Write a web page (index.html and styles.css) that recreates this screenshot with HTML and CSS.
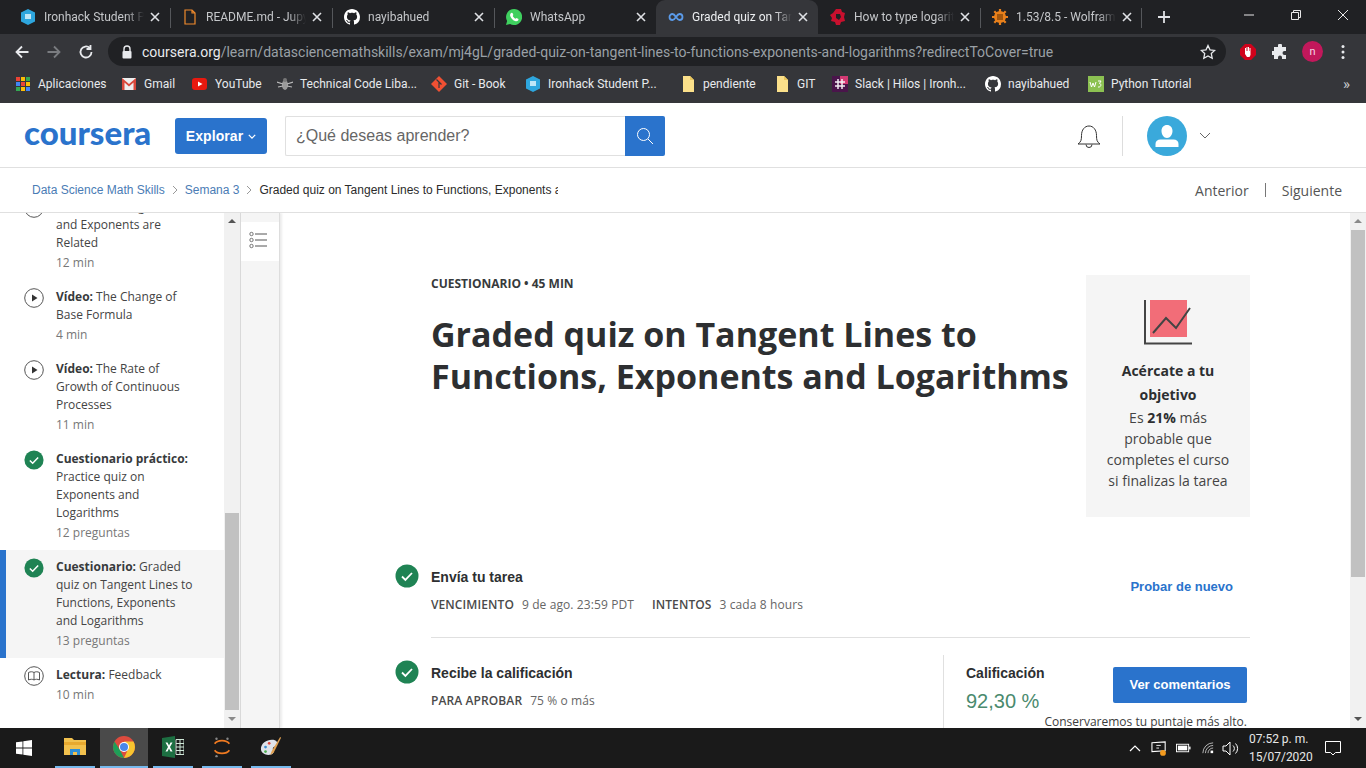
FILE: index.html
```html
<!DOCTYPE html>
<html lang="es">
<head>
<meta charset="utf-8">
<title>Graded quiz on Tangent Lines</title>
<link rel="stylesheet" href="styles.css">
</head>
<body>
<svg class="defs" width="0" height="0">
  <symbol id="gh" viewBox="0 0 16 16"><path fill="#fff" d="M8 0C3.58 0 0 3.58 0 8c0 3.54 2.29 6.53 5.47 7.59.4.07.55-.17.55-.38 0-.19-.01-.82-.01-1.49-2.01.37-2.53-.49-2.69-.94-.09-.23-.48-.94-.82-1.13-.28-.15-.68-.52-.01-.53.63-.01 1.08.58 1.23.82.72 1.21 1.87.87 2.33.66.07-.52.28-.87.51-1.07-1.78-.2-3.64-.89-3.64-3.95 0-.87.31-1.59.82-2.15-.08-.2-.36-1.02.08-2.12 0 0 .67-.21 2.2.82.64-.18 1.32-.27 2-.27.68 0 1.36.09 2 .27 1.53-1.04 2.2-.82 2.2-.82.44 1.1.16 1.92.08 2.12.51.56.82 1.27.82 2.15 0 3.07-1.87 3.75-3.65 3.95.29.25.54.73.54 1.48 0 1.07-.01 1.93-.01 2.2 0 .21.15.46.55.38A8.013 8.013 0 0016 8c0-4.42-3.58-8-8-8z"/></symbol>
  <symbol id="hex" viewBox="0 0 16 16"><path fill="#2ea6de" d="M8 0l7 3.6v8.8L8 16l-7-3.6V3.6z"/><rect x="5" y="5" width="6" height="5" fill="#bfe6f7"/></symbol>
  <symbol id="x" viewBox="0 0 10 10"><path d="M1 1l8 8M9 1l-8 8" stroke="#dfe1e5" stroke-width="1.6" fill="none"/></symbol>
  <symbol id="folder" viewBox="0 0 16 16"><path fill="#fbe08a" d="M3 0h7l4 4v12H3z"/><path fill="#e9c65c" d="M10 0l4 4h-4z"/></symbol>
  <symbol id="check" viewBox="0 0 24 24"><circle cx="12" cy="12" r="11.5" fill="#1f8354"/><path d="M7 12.5l3.4 3.4L17 9" fill="none" stroke="#fff" stroke-width="1.8"/></symbol>
  <symbol id="play" viewBox="0 0 20 20"><circle cx="10" cy="10" r="9.3" fill="none" stroke="#555" stroke-width="1"/><path d="M8 6.5l5.5 3.5L8 13.500z" fill="#333"/></symbol>
</svg>

<header class="chrome">
  <div class="tabs">
    <div class="tab"><svg class="fav"><use href="#hex"/></svg><span class="tab-title">Ironhack Student Portal</span><svg class="tab-x"><use href="#x"/></svg></div>
    <div class="tab sep"><svg class="fav" viewBox="0 0 16 16"><path d="M3 1h7l3 3v11H3z M10 1v3h3" fill="none" stroke="#f08a2c" stroke-width="1.200"/></svg><span class="tab-title">README.md - Jupyter</span><svg class="tab-x"><use href="#x"/></svg></div>
    <div class="tab sep"><svg class="fav"><use href="#gh"/></svg><span class="tab-title">nayibahued</span><svg class="tab-x"><use href="#x"/></svg></div>
    <div class="tab sep"><svg class="fav" viewBox="0 0 16 16"><path fill="#3fd05f" d="M8 0a8 8 0 0 0-6.900 12L0 16l4.100-1.100A8 8 0 1 0 8 0z"/><path fill="#fff" d="M5.500 3.800l1 .1.900 2.200-.7 1c.6 1.200 1.500 2 2.800 2.700l1-.9 2 1-.2 1.300c-.6 1-2 1.300-3.200.9C7.300 11.500 5 9.500 4.200 7c-.4-1.300.3-2.600 1.300-3.200z"/></svg><span class="tab-title">WhatsApp</span><svg class="tab-x"><use href="#x"/></svg></div>
    <div class="tab active"><svg class="fav" viewBox="0 0 16 16"><path d="M4.500 5a3 3 0 1 0 0 6c3 0 4-6 7-6a3 3 0 1 1 0 6c-3 0-4-6-7-6z" fill="none" stroke="#5b9bea" stroke-width="1.800"/></svg><span class="tab-title">Graded quiz on Tangent</span><svg class="tab-x"><use href="#x"/></svg></div>
    <div class="tab"><svg class="fav" viewBox="0 0 16 16"><path fill="#c8102e" d="M6 0h5l1 3 3 1-1 4 1 4-4 1-1 3H6l-1-3-4-1 1-3-2-3 3-2z"/><path fill="#202124" d="M6 5h4l1 3-2 3-3-2z"/></svg><span class="tab-title">How to type logarithm</span><svg class="tab-x"><use href="#x"/></svg></div>
    <div class="tab sep sep-end"><svg class="fav" viewBox="0 0 16 16"><circle cx="8" cy="8" r="6" fill="#e8801c"/><path d="M8 0v16M0 8h16M2.300 2.300l11.400 11.400M13.700 2.300L2.300 13.700" stroke="#e8801c" stroke-width="2.200"/><path d="M5 6h6M5 8h6M5 10h6" stroke="#5a2c00" stroke-width="1"/></svg><span class="tab-title">1.53/8.5 - Wolfram Alpha</span><svg class="tab-x"><use href="#x"/></svg></div>
    <svg class="new-tab" viewBox="0 0 14 14"><path d="M7 1v12M1 7h12" stroke="#dfe1e5" stroke-width="1.800"/></svg>
    <div class="win">
      <svg viewBox="0 0 12 12"><path d="M1 6h10" stroke="#e8e8e8" stroke-width="1"/></svg>
      <svg viewBox="0 0 12 12"><path d="M1.500 3.500h7v7h-7zM3.500 3.500v-2h7v7h-2" fill="none" stroke="#e8e8e8" stroke-width="1"/></svg>
      <svg viewBox="0 0 12 12"><path d="M1 1l10 10M11 1L1 11" stroke="#e8e8e8" stroke-width="1"/></svg>
    </div>
  </div>
  <div class="toolbar">
    <svg class="nav" viewBox="0 0 16 16"><path d="M14.500 8H2.500M8 2.500L2.500 8 8 13.500" fill="none" stroke="#e8eaed" stroke-width="1.800"/></svg>
    <svg class="nav" viewBox="0 0 16 16"><path d="M1.500 8h12M8 2.500L13.500 8 8 13.500" fill="none" stroke="#7a7c80" stroke-width="1.800"/></svg>
    <svg class="nav" viewBox="0 0 16 16"><path d="M13.500 8A5.500 5.500 0 1 1 11.800 4M12.500 1v4h-4" fill="none" stroke="#e8eaed" stroke-width="1.800"/></svg>
    <div class="omnibox">
      <svg class="lock" viewBox="0 0 12 14"><path d="M3 6V4a3 3 0 0 1 6 0v2" fill="none" stroke="#e8eaed" stroke-width="1.400"/><rect x="1.500" y="6" width="9" height="7.500" rx="1" fill="#e8eaed"/></svg>
      <span class="url"><b>coursera.org</b>/learn/datasciencemathskills/exam/mj4gL/graded-quiz-on-tangent-lines-to-functions-exponents-and-logarithms?redirectToCover=true</span>
      <svg class="star" viewBox="0 0 16 16"><path d="M8 1.500l2 4.300 4.700.6-3.400 3.200.9 4.700L8 12l-4.200 2.300.9-4.700L1.300 6.400 6 5.800z" fill="none" stroke="#e8eaed" stroke-width="1.300"/></svg>
    </div>
    <svg class="ext" viewBox="0 0 16 16"><path fill="#d0021b" d="M5 0h6l5 5v6l-5 5H5l-5-5V5z"/><path fill="#fff" d="M5 7V4h1v3h.5V3h1v4H8V3h1v4h.5V4h1v7l-1 2H7L5 10z"/></svg>
    <svg class="ext" viewBox="0 0 16 16"><path fill="#e8eaed" d="M6 1.500a2 2 0 0 1 4 0V3h4v4h-1.500a2 2 0 0 0 0 4H14v4H10v-1.500a2 2 0 0 0-4 0V15H2v-4H.8a2 2 0 0 1 0-4H2V3h4z"/></svg>
    <span class="avatar-n">n</span>
    <svg class="dots" viewBox="0 0 4 16"><circle cx="2" cy="2.500" r="1.500" fill="#e8eaed"/><circle cx="2" cy="8" r="1.500" fill="#e8eaed"/><circle cx="2" cy="13.500" r="1.500" fill="#e8eaed"/></svg>
  </div>
  <div class="bookmarks">
    <div class="bm"><svg viewBox="0 0 16 16"><path fill="#ea4335" d="M1 1h4v4H1z"/><path fill="#fbbc05" d="M6 1h4v4H6z"/><path fill="#34a853" d="M11 1h4v4h-4z"/><path fill="#4285f4" d="M1 6h4v4H1z"/><path fill="#ea4335" d="M6 6h4v4H6z"/><path fill="#fbbc05" d="M11 6h4v4h-4z"/><path fill="#34a853" d="M1 11h4v4H1z"/><path fill="#fbbc05" d="M6 11h4v4H6z"/><path fill="#4285f4" d="M11 11h4v4h-4z"/></svg><span>Aplicaciones</span></div>
    <div class="bm"><svg viewBox="0 0 16 16"><path fill="#eee" d="M1 2h14v12H1z"/><path fill="#d9483b" d="M1 2l7 6 7-6v12h-2.500V6.500L8 10.500l-4.500-4V14H1z"/></svg><span>Gmail</span></div>
    <div class="bm"><svg viewBox="0 0 16 16"><rect y="2" width="15" height="12" rx="3" fill="#e8190f"/><path fill="#fff" d="M6 5.500l4.500 2.500L6 10.500z"/></svg><span>YouTube</span></div>
    <div class="bm"><svg viewBox="0 0 16 16"><ellipse cx="8" cy="9" rx="3" ry="5" fill="#9a9a9a"/><path d="M0 6l6 2M16 6l-6 2M1 11l5-1M15 11l-5-1" stroke="#bbb" stroke-width="1.200"/><circle cx="8" cy="4" r="2" fill="#777"/></svg><span>Technical Code Liba...</span></div>
    <div class="bm"><svg viewBox="0 0 16 16"><path fill="#f05033" d="M8 0l8 8-8 8-8-8z"/><path d="M5.500 3.500l5 5M8 6v6" stroke="#35363a" stroke-width="1.200"/></svg><span>Git - Book</span></div>
    <div class="bm"><svg><use href="#hex"/></svg><span>Ironhack Student P...</span></div>
    <div class="bm"><svg><use href="#folder"/></svg><span>pendiente</span></div>
    <div class="bm"><svg><use href="#folder"/></svg><span>GIT</span></div>
    <div class="bm"><svg viewBox="0 0 16 16"><rect width="16" height="16" fill="#4a154b"/><path fill="#d33a73" d="M8 0h8v8H8z"/><path d="M6 3v10M10 3v10M3 6h10M3 10h10" stroke="#f3eef3" stroke-width="1.500"/></svg><span>Slack | Hilos | Ironh...</span></div>
    <div class="bm"><svg><use href="#gh"/></svg><span>nayibahued</span></div>
    <div class="bm"><svg viewBox="0 0 16 16"><rect width="16" height="16" fill="#8cc152"/><path d="M2 6l1.500 5L5 7l1.500 4L8 6M10 5h3l-1.500 2.500c2 0 2 4-1.500 3.500" fill="none" stroke="#fff" stroke-width="1"/></svg><span>Python Tutorial</span></div>
    <div class="bm-more">»</div>
  </div>
</header>

<div class="site-head">
  <div class="logo">coursera</div>
  <div class="explore">Explorar <svg viewBox="0 0 10 6"><path d="M1 1l4 4 4-4" fill="none" stroke="#fff" stroke-width="1.600"/></svg></div>
  <div class="search">
    <div class="search-input">¿Qué deseas aprender?</div>
    <div class="search-btn"><svg viewBox="0 0 18 18"><circle cx="7.500" cy="7.500" r="6" fill="none" stroke="#fff" stroke-width="1"/><path d="M12 12l5 5" stroke="#fff" stroke-width="1"/></svg></div>
  </div>
  <div class="head-right">
    <svg class="bell" viewBox="0 0 24 25"><path d="M1 19c3-2 3.500-4 3.500-8.500C4.500 5 7.500 1 12 1s7.500 4 7.500 9.500c0 4.500.5 6.500 3.500 8.500z M9 19.500a3 3 0 0 0 6 0" fill="none" stroke="#333" stroke-width="1"/></svg>
    <div class="vsep"></div>
    <svg class="user" viewBox="0 0 40 40"><circle cx="20" cy="20" r="20" fill="#3aa9db"/><path fill="#fff" d="M20 9c3.300 0 5.500 2.600 5.500 6S23.300 22 20 22s-5.500-3.600-5.500-7 2.200-6 5.500-6zM8.500 31v-3c0-3 2-4.500 5-4.500h13c3 0 5 1.500 5 4.500v3z"/></svg>
    <svg class="caret" viewBox="0 0 12 7"><path d="M1 1l5 5 5-5" fill="none" stroke="#666" stroke-width="1"/></svg>
  </div>
</div>

<div class="crumbs">
  <a class="crumb">Data Science Math Skills</a>
  <svg class="crumb-sep" viewBox="0 0 6 10"><path d="M1 1l4 4-4 4" fill="none" stroke="#999" stroke-width="1"/></svg>
  <a class="crumb">Semana 3</a>
  <svg class="crumb-sep" viewBox="0 0 6 10"><path d="M1 1l4 4-4 4" fill="none" stroke="#999" stroke-width="1"/></svg>
  <span class="crumb-now">Graded quiz on Tangent Lines to Functions, Exponents and Logarithms</span>
  <div class="pager"><span>Anterior</span><i></i><span>Siguiente</span></div>
</div>

<main class="body">
  <nav class="side">
    <div class="item"><svg class="ico"><use href="#play"/></svg><div><p><b>Vídeo:</b> How Logarithms<br>and Exponents are<br>Related</p><small>12 min</small></div></div>
    <div class="item"><svg class="ico"><use href="#play"/></svg><div><p><b>Vídeo:</b> The Change of<br>Base Formula</p><small>4 min</small></div></div>
    <div class="item"><svg class="ico"><use href="#play"/></svg><div><p><b>Vídeo:</b> The Rate of<br>Growth of Continuous<br>Processes</p><small>11 min</small></div></div>
    <div class="item"><svg class="ico"><use href="#check"/></svg><div><p><b>Cuestionario práctico:</b><br>Practice quiz on<br>Exponents and<br>Logarithms</p><small>12 preguntas</small></div></div>
    <div class="item current"><svg class="ico"><use href="#check"/></svg><div><p><b>Cuestionario:</b> Graded<br>quiz on Tangent Lines to<br>Functions, Exponents<br>and Logarithms</p><small>13 preguntas</small></div></div>
    <div class="item"><svg class="ico" viewBox="0 0 20 20"><circle cx="10" cy="10" r="9.300" fill="none" stroke="#555"/><path d="M4.500 6.500c2-1 4-1 5.500 0 1.500-1 3.500-1 5.500 0V14c-2-1-4-1-5.500 0-1.500-1-3.500-1-5.500 0zM10 6.500V14" fill="none" stroke="#444" stroke-width=".9"/></svg><div><p><b>Lectura:</b> Feedback</p><small>10 min</small></div></div>
  </nav>
  <div class="sbar sbar-left"><span class="up"></span><span class="thumb"></span><span class="down"></span></div>
  <div class="rail"><div class="rail-btn"><svg viewBox="0 0 18 18"><circle cx="2.500" cy="3" r="1.700" fill="none" stroke="#555" stroke-width=".8"/><circle cx="2.500" cy="9" r="1.700" fill="none" stroke="#555" stroke-width=".8"/><circle cx="2.500" cy="15" r="1.700" fill="none" stroke="#555" stroke-width=".8"/><path d="M6 3h12M6 9h12M6 15h12" stroke="#555" stroke-width="1"/></svg></div></div>
  <section class="content">
    <div class="cover">
      <div class="cover-text">
        <div class="kicker">CUESTIONARIO • 45 MIN</div>
        <h1>Graded quiz on Tangent Lines to Functions, Exponents and Logarithms</h1>
      </div>
      <aside class="goal">
        <svg viewBox="0 0 48 46"><rect x="6" y="0" width="37" height="37" fill="#f26d78"/><path d="M1 0v43.500h47" fill="none" stroke="#444" stroke-width="2"/><path d="M9 33l13-15 10 10 14-20" fill="none" stroke="#444" stroke-width="2"/></svg>
        <h2>Acércate a tu objetivo</h2>
        <p>Es <b>21%</b> más probable que completes el curso si finalizas la tarea</p>
      </aside>
    </div>
    <div class="step step-one">
      <svg class="step-ico"><use href="#check"/></svg>
      <div class="step-body">
        <h3>Envía tu tarea</h3>
        <div class="meta"><b>VENCIMIENTO</b><span>9 de ago. 23:59 PDT</span><b class="gap">INTENTOS</b><span>3 cada 8 hours</span></div>
      </div>
      <a class="retry">Probar de nuevo</a>
    </div>
    <div class="step step-two">
      <svg class="step-ico"><use href="#check"/></svg>
      <div class="step-body">
        <h3>Recibe la calificación</h3>
        <div class="meta"><b>PARA APROBAR</b><span>75 % o más</span></div>
      </div>
      <div class="grade">
        <div class="grade-row">
          <div><h4>Calificación</h4><div class="score">92,30 %</div></div>
          <a class="btn">Ver comentarios</a>
        </div>
        <div class="note">Conservaremos tu puntaje más alto.</div>
      </div>
    </div>
  </section>
  <div class="sbar sbar-right"><span class="up"></span><span class="thumb"></span><span class="down"></span></div>
</main>

<footer class="taskbar">
  <svg class="t-win" viewBox="0 0 16 16"><path fill="#fff" d="M0 2.300l6.500-.9v6.200H0zM7.300 1.300L16 0v7.600H7.300zM0 8.400h6.500v6.200L0 13.700zM7.300 8.400H16V16l-8.700-1.200z"/></svg>
  <div class="t-app"><svg viewBox="0 0 22 20"><path fill="#f2c14e" d="M0 1h8l2 2h12v15H0z"/><path fill="#e8a92f" d="M0 5h22v3H0z"/><path fill="#2f8fd6" d="M6 12h10v6h-3v-3H9v3H6z"/></svg></div>
  <div class="t-app on"><svg viewBox="0 0 22 22"><circle cx="11" cy="11" r="11" fill="#dd4b3e"/><path fill="#1e9e58" d="M11 22A11 11 0 0 1 1.500 5.500L7 14l4 8z"/><path fill="#f7c42f" d="M11 22a11 11 0 0 0 9.500-16.500H11l4 8z"/><circle cx="11" cy="11" r="5" fill="#fff"/><circle cx="11" cy="11" r="4" fill="#4a86e8"/></svg></div>
  <div class="t-app"><svg viewBox="0 0 22 22"><path fill="#1d6f42" d="M0 2l13-2v22L0 20z"/><path fill="#fff" d="M3.500 6.500h2L7 9.500l1.500-3h2L8 11l2.500 4.500h-2L7 12.500l-1.500 3h-2L6 11z"/><path d="M14 3.500h8v15h-8zM14 7.500h8M14 11h8M14 14.500h8M18 3.500v15" fill="none" stroke="#cfe8d8" stroke-width="1"/></svg></div>
  <div class="t-app"><svg viewBox="0 0 22 24"><path d="M3 8.500c3-4.500 13-4.500 16 0M3 15.500c3 4.500 13 4.500 16 0" fill="none" stroke="#ef7a21" stroke-width="2"/><circle cx="5" cy="3" r="1.300" fill="#888"/><circle cx="17" cy="3" r="1.300" fill="#888"/><circle cx="5" cy="22" r="1.300" fill="#888"/></svg></div>
  <div class="t-app"><svg viewBox="0 0 24 24"><path fill="#dfe3ea" d="M1 14c0-6 6-10 12-10 5 0 7 3 5 6-1 2-4 1-4 4 0 2 2 3 0 5-3 3-13 2-13-5z"/><circle cx="6" cy="12" r="1.500" fill="#3b8ed0"/><circle cx="10" cy="8" r="1.500" fill="#e0473d"/><circle cx="6" cy="17" r="1.500" fill="#4caf50"/><path d="M22 1l-9 15-2 5 4-3 8-16z" fill="#e0a050"/></svg></div>
  <div class="tray">
    <svg class="tray-i chev" viewBox="0 0 12 7"><path d="M1 6l5-5 5 5" fill="none" stroke="#fff" stroke-width="1.200"/></svg>
    <svg class="tray-i mon" viewBox="0 0 18 17"><path d="M1 2l15-1v10l-15 1z" fill="none" stroke="#fff" stroke-width="1.200"/><path d="M6 5h5M6 8h3" stroke="#fff"/><circle cx="13.500" cy="13.500" r="3.300" fill="#f39a1e"/></svg>
    <svg class="tray-i bat" viewBox="0 0 16 10"><rect x=".5" y="1" width="13" height="8" fill="none" stroke="#fff"/><rect x="2" y="2.500" width="10" height="5" fill="#fff"/><rect x="14" y="3.500" width="1.500" height="3" fill="#fff"/></svg>
    <svg class="tray-i wifi" viewBox="0 0 14 14"><path d="M1 13A12 12 0 0 1 13 1M4 13a9 9 0 0 1 9-9M7 13a6 6 0 0 1 6-6" fill="none" stroke="#ccc" stroke-width="1"/><rect x="10" y="10" width="3" height="3" fill="#fff"/></svg>
    <svg class="tray-i vol" viewBox="0 0 17 15"><path d="M1 5h3l4-4v13l-4-4H1zM11 4.500a4 4 0 0 1 0 6M13.500 2.500a7 7 0 0 1 0 10" fill="none" stroke="#fff" stroke-width="1"/></svg>
    <div class="clock"><div>07:52 p. m.</div><div>15/07/2020</div></div>
    <svg class="tray-i msg" viewBox="0 0 16 15"><path d="M.5.500h15v11h-5L8 14l-2.500-2.500h-5z" fill="none" stroke="#fff" stroke-width="1"/></svg>
  </div>
</footer>
</body>
</html>
```
FILE: styles.css
```css
* { box-sizing: border-box; }
html, body { margin: 0; height: 100%; }
body {
  width: 1366px; height: 768px; overflow: hidden; display: flex; flex-direction: column;
  background: #fff; font-family: "Open Sans", "Liberation Sans", sans-serif; color: #373a3c;
}
.defs { position: absolute; }
p, h1, h2, h3, h4 { margin: 0; }

/* browser chrome */
.chrome { flex: none; height: 103px; background: #35363a; color: #e8eaed; font-family: Roboto, "Open Sans", sans-serif; font-size: 12px; }
.tabs { height: 34px; background: #202124; padding-left: 8px; display: flex; align-items: center; }
.tab { width: 162px; height: 34px; flex: none; display: flex; align-items: center; padding: 0 10px 0 12px; color: #c5c7ca; position: relative; }
.tab.sep::before { content: ""; position: absolute; left: 0; top: 8px; height: 20px; width: 1px; background: #55575b; }
.tab.sep-end::after { content: ""; position: absolute; right: 0; top: 8px; height: 20px; width: 1px; background: #55575b; }
.tab.active { background: #35363a; color: #eceef0; border-radius: 9px 9px 0 0; }
.fav { width: 16px; height: 16px; flex: none; margin-right: 8px; }
.tab-title { flex: 1; min-width: 0; white-space: nowrap; overflow: hidden; -webkit-mask-image: linear-gradient(90deg, #000 82%, transparent); mask-image: linear-gradient(90deg, #000 82%, transparent); }
.tab-x { width: 10px; height: 10px; flex: none; margin-left: 6px; }
.new-tab { width: 14px; height: 14px; margin-left: 15px; }
.win { margin-left: auto; display: flex; gap: 35px; padding-right: 17px; margin-top: -4px; }
.win svg { width: 12px; height: 12px; }

.toolbar { height: 35px; display: flex; align-items: center; padding-left: 14px; }
.nav { width: 16px; height: 16px; margin-right: 16px; flex: none; }
.omnibox { width: 1118px; height: 29px; margin-left: -2px; background: #202124; border-radius: 15px; display: flex; align-items: center; padding: 0 10px 0 13px; font-size: 14px; }
.lock { width: 12px; height: 14px; flex: none; margin-right: 9px; }
.url { flex: 1; white-space: nowrap; overflow: hidden; color: #9aa0a6; font-size: 14px; }
.url b { font-weight: 400; color: #e8eaed; }
.star { width: 16px; height: 16px; flex: none; }
.ext { width: 16px; height: 16px; flex: none; margin-left: 14px; }
.ext + .ext { margin-left: 16px; }
.avatar-n { width: 21px; height: 21px; margin-left: 14px; border-radius: 50%; background: #c2185b; color: #f5d6e3; font-size: 11px; display: flex; align-items: center; justify-content: center; flex: none; }
.dots { width: 4px; height: 16px; margin-left: 18px; flex: none; }

.bookmarks { height: 34px; padding-bottom: 4px; display: grid; grid-template-columns: 106px 71px 85px 154px 94px 155px 94px 58px 153px 103px 255px 1fr; padding-left: 15px; align-items: center; }
.bm { display: flex; align-items: center; gap: 7px; white-space: nowrap; color: #e8eaed; }
.bm svg { width: 16px; height: 16px; flex: none; }
.bm-more { color: #c8cacd; font-size: 15px; }

/* site header */
.site-head { flex: none; height: 65px; padding-top: 1px; border-bottom: 1px solid #e0e0e0; display: flex; align-items: center; padding-left: 24px; }
.logo { width: 151px; font-family: "Lato", sans-serif; font-weight: 900; font-size: 33px; color: #2a73cc; line-height: 1; margin-top: -7px; }
.explore { width: 92px; height: 36px; background: #2a73cc; border-radius: 3px; color: #fff; font-family: "Liberation Sans", sans-serif; font-weight: 700; font-size: 14px; letter-spacing: .1px; display: flex; align-items: center; justify-content: center; gap: 5px; }
.explore svg { width: 8px; height: 5px; margin-top: 2px; }
.search { margin-left: 18px; display: flex; height: 40px; }
.search-input { width: 340px; border: 1px solid #e0e0e0; border-right: 0; border-radius: 2px 0 0 2px; padding-left: 10px; font: 16px/38px "Liberation Sans", sans-serif; color: #666; }
.search-btn { width: 40px; background: #2a73cc; border-radius: 0 2px 2px 0; display: flex; align-items: center; justify-content: center; }
.search-btn svg { width: 18px; height: 18px; }
.head-right { margin-left: auto; display: flex; align-items: center; padding-right: 155px; }
.bell { width: 24px; height: 25px; margin: 3px 1px 0 -1px; }
.vsep { width: 1px; height: 40px; background: #ddd; margin: 0 24px 0 20px; }
.user { width: 40px; height: 40px; }
.caret { width: 12px; height: 7px; margin-left: 12px; }

/* breadcrumb */
.crumbs { flex: none; height: 45px; border-bottom: 1px solid #e0e0e0; display: flex; align-items: center; padding: 0 24px 1px 32px; font: 12px "Liberation Sans", sans-serif; }
.crumb { color: #4a7cb5; white-space: nowrap; }
.crumb-sep { width: 6px; height: 10px; margin: 0 7px; flex: none; }
.crumb-now { width: 299px; margin-left: 0; overflow: hidden; white-space: nowrap; color: #2b2b2b; }
.pager { margin-left: auto; display: flex; align-items: center; font: 14px "Open Sans", sans-serif; color: #555; padding-top: 1px; }
.pager i { width: 1px; height: 14px; background: #777; margin: 0 16px; }

/* body */
.body { flex: 1; min-height: 0; display: flex; overflow: hidden; }
.side { width: 224px; flex: none; display: flex; flex-direction: column; justify-content: flex-end; padding-bottom: 16px; overflow: hidden; font-size: 12px; }
.item { flex: none; display: flex; gap: 12px; padding: 8px 8px 7px 24px; }
.item.current { background: #f5f5f5; box-shadow: inset 6px 0 0 #2a73cc; }
.ico { width: 20px; height: 20px; flex: none; }
.item p { line-height: 18px; color: #444; white-space: nowrap; }
.item p b { color: #373a3c; }
.item small { display: block; font-size: 12px; line-height: 20px; padding-top: 1px; color: #777; }

.sbar { width: 16px; flex: none; background: #f1f1f1; display: flex; flex-direction: column; align-items: center; position: relative; }
.thumb { width: 14px; background: #c1c1c1; }
.up, .down { width: 0; height: 0; border-left: 4px solid transparent; border-right: 4px solid transparent; }
.up { border-bottom: 4px solid #555; }
.down { border-top: 4px solid #8a8a8a; }
.sbar-left .up { margin-top: 6px; }
.sbar-left .thumb { height: 197px; margin-top: 290px; }
.sbar-left .down { margin-top: 7px; }
.sbar-right .up { margin-top: 6px; border-bottom-color: #8a8a8a; }
.sbar-right .thumb { height: 347px; margin-top: 7px; }
.sbar-right .down { margin-top: 140px; border-top-color: #555; }

.rail { width: 40px; flex: none; background: #f5f5f5; border-left: 1px solid #d9d9d9; border-right: 1px solid #ddd; box-shadow: 2px 0 2px rgba(0,0,0,.08); padding-top: 9px; }
.rail-btn { height: 39px; background: #fff; display: flex; align-items: center; justify-content: flex-start; padding: 0 0 3px 8px; }
.rail-btn svg { width: 18px; height: 18px; }

.content { flex: 1; min-width: 0; padding: 62px 100px 0 151px; overflow: hidden; }
.cover { display: flex; height: 242px; }
.cover-text { flex: 1; min-width: 0; }
.kicker { font-size: 12px; font-weight: 700; line-height: 16px; padding-top: 1px; height: 16px; color: #373a3c; }
h1 { margin-top: 22px; width: 650px; font-size: 34px; line-height: 42px; font-weight: 700; color: #2d2f31; }
.goal { width: 164px; flex: none; background: #f5f5f5; padding-top: 25px; text-align: center; font-size: 14px; }
.goal svg { width: 48px; height: 46px; display: block; margin: 0 auto; }
.goal h2 { margin-top: 13px; padding: 0 20px; font-size: 14px; font-weight: 700; line-height: 24px; color: #2d2f31; }
.goal p { padding: 0 18px; line-height: 21px; color: #444; }
.goal p b { color: #2d2f31; }

.step { display: flex; margin-left: -36px; position: relative; }
.step-one { margin-top: 47px; height: 74px; }
.step-two { margin-top: 0; padding-top: 22px; }
.step-one::after { content: ""; position: absolute; left: 36px; right: 0; bottom: 0; height: 1px; background: #e0e0e0; }
.step-ico { width: 24px; height: 24px; flex: none; margin-right: 12px; }
.step-body { flex: 1; min-width: 0; padding-top: 3px; }
h3 { font: 700 14px/20px "Liberation Sans", sans-serif; color: #2d2f31; }
.meta { margin-top: 9px; font-size: 12px; line-height: 18px; color: #666; white-space: nowrap; letter-spacing: .1px; }
.meta b { color: #4a4a4a; font-weight: 600; margin-right: 8px; }
.meta .gap { margin-left: 18px; }
.retry { align-self: flex-start; margin: 15px 17px 0 0; font: 700 13px/16px "Liberation Sans", sans-serif; color: #2a73cc; }
.grade { width: 307px; flex: none; margin-top: -5px; border-left: 1px solid #e0e0e0; padding: 0 3px 0 22px; height: 73px; }
.grade-row { display: flex; justify-content: space-between; }
h4 { font: 700 14px/20px "Liberation Sans", sans-serif; color: #2d2f31; margin-top: 8px; }
.score { font: 20px/26px "Liberation Sans", sans-serif; color: #4a8a6e; margin-top: 5px; }
.btn { width: 134px; height: 36px; margin-top: 12px; background: #2a73cc; border-radius: 2px; color: #fff; font: 700 13px/35px "Liberation Sans", sans-serif; text-align: center; }
.note { text-align: right; font-size: 12px; line-height: 16px; margin: 0 0 0 -60px; white-space: nowrap; color: #3c3c3c; }

/* taskbar */
.taskbar { flex: none; height: 40px; background: #1a1a1a; display: flex; align-items: stretch; color: #fff; font-family: Roboto, "Open Sans", sans-serif; font-size: 12px; padding-left: 16px; }
.t-win { width: 16px; height: 16px; align-self: center; margin-right: 23px; margin-top: -1px; }
.t-app { width: 40px; margin-right: 9px; display: flex; align-items: center; justify-content: center; border-bottom: 2px solid #76b9ed; }
.t-app svg { width: 22px; height: 22px; }
.t-app.on { width: 48px; margin: 0 5px 0 -4px; background: #4a4a4a; }
.tray { margin-left: auto; display: flex; align-items: center; padding-right: 25px; }
.tray-i { flex: none; }
.chev { width: 12px; height: 7px; margin-right: 10px; }
.mon { width: 16px; height: 15px; margin-right: 9px; }
.bat { width: 15px; height: 10px; margin-right: 11px; }
.wifi { width: 12px; height: 12px; margin-right: 8px; }
.vol { width: 17px; height: 15px; margin-right: 10px; }
.clock { line-height: 18px; text-align: right; width: 58px; flex: none; margin-right: 18px; color: #e8e8e8; white-space: nowrap; }
.msg { width: 16px; height: 15px; }
```
